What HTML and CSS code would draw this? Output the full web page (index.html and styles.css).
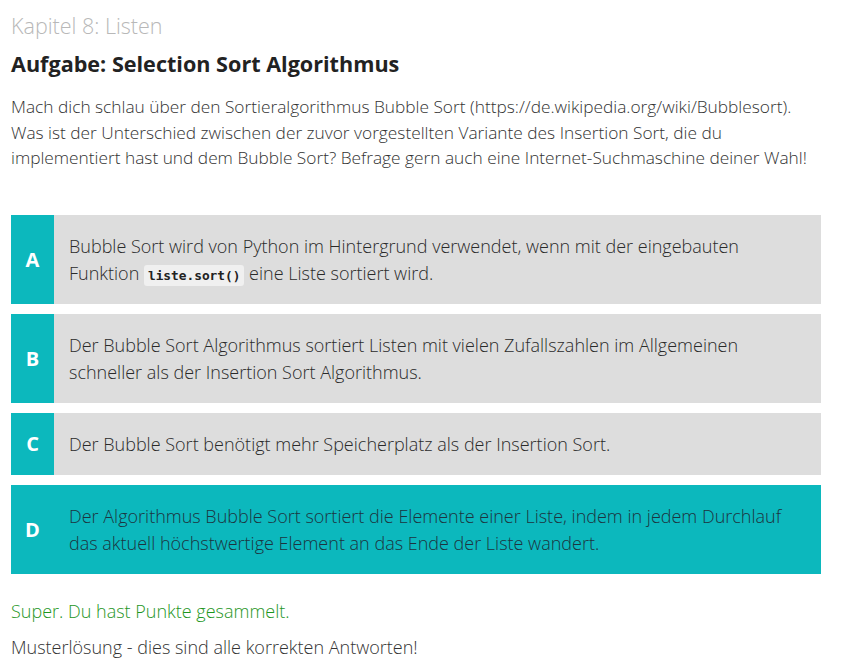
FILE: index.html
```html
<!DOCTYPE html>
<html lang="de">
<head>
<meta charset="utf-8">
<link rel="stylesheet" href="styles.css">
</head>
<body>
<main class="page">
  <div class="chapter">Kapitel 8: Listen</div>
  <h1 class="title">Aufgabe: Selection Sort Algorithmus</h1>
  <p class="intro">Mach dich schlau über den Sortieralgorithmus Bubble Sort (https://de.wikipedia.org/wiki/Bubblesort). Was ist der Unterschied zwischen der zuvor vorgestellten Variante des Insertion Sort, die du implementiert hast und dem Bubble Sort? Befrage gern auch eine Internet-Suchmaschine deiner Wahl!</p>

  <div class="options">
    <div class="option">
      <div class="letter">A</div>
      <div class="text">Bubble Sort wird von Python im Hintergrund verwendet, wenn mit der eingebauten Funktion <code class="code">liste.sort()</code> eine Liste sortiert wird.</div>
    </div>
    <div class="option">
      <div class="letter">B</div>
      <div class="text">Der Bubble Sort Algorithmus sortiert Listen mit vielen Zufallszahlen im Allgemeinen schneller als der Insertion Sort Algorithmus.</div>
    </div>
    <div class="option">
      <div class="letter">C</div>
      <div class="text">Der Bubble Sort benötigt mehr Speicherplatz als der Insertion Sort.</div>
    </div>
    <div class="option correct">
      <div class="letter">D</div>
      <div class="text">Der Algorithmus Bubble Sort sortiert die Elemente einer Liste, indem in jedem Durchlauf das aktuell höchstwertige Element an das Ende der Liste wandert.</div>
    </div>
  </div>

  <p class="success">Super. Du hast Punkte gesammelt.</p>
  <p class="solution">Musterlösung - dies sind alle korrekten Antworten!</p>
</main>
</body>
</html>
```

FILE: styles.css
```css
html, body {
  margin: 0;
  padding: 0;
  background: #ffffff;
}

body {
  font-family: "Open Sans", "Liberation Sans", sans-serif;
  color: #333333;
}

.page {
  width: 810px;
  padding: 12px 0 0 11px;
}

.chapter {
  font-size: 21.5px;
  font-weight: 300;
  color: #b8b8b8;
  line-height: 28px;
}

.title {
  margin: 10px 0 0 0;
  font-size: 21.6px;
  font-weight: 700;
  line-height: 28px;
  color: #222222;
}

.intro {
  margin: 16px 0 0 0;
  font-size: 17.3px;
  font-weight: 300;
  line-height: 25.5px;
  color: #333333;
}

.options {
  margin-top: 44px;
  display: flex;
  flex-direction: column;
  gap: 10px;
}

.option {
  display: flex;
  background: #dddddd;
}

.option.correct {
  background: #0cb8bd;
}

.letter {
  width: 43px;
  flex: 0 0 43px;
  background: #0cb8bd;
  color: #ffffff;
  font-weight: 700;
  font-size: 20px;
  display: flex;
  align-items: center;
  justify-content: center;
}

.text {
  padding: 18px 22px 17px 15px;
  font-size: 18px;
  font-weight: 300;
  line-height: 27px;
  color: #2a2a2a;
}

.correct .text {
  color: #1c3440;
}

.code {
  font-family: "DejaVu Sans Mono", "Liberation Mono", monospace;
  font-size: 12.8px;
  line-height: 1;
  font-weight: 700;
  background: #f0f0f0;
  color: #222222;
  padding: 3px 4px;
  border-radius: 3px;
}

.success {
  margin: 24px 0 0 0;
  font-size: 18px;
  font-weight: 300;
  line-height: 26px;
  color: #1e961e;
}

.solution {
  margin: 10px 0 0 0;
  font-size: 18px;
  font-weight: 300;
  line-height: 26px;
  color: #333333;
}
```
